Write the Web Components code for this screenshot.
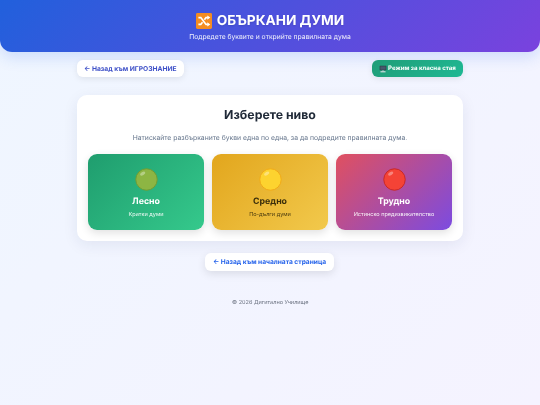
<!DOCTYPE html>
<html lang="bg">
<head>
<meta charset="utf-8">
<title>Объркани думи</title>
<style>
  html, body { margin: 0; height: 100%; }
  body {
    min-height: 405px;
    overflow: hidden;
    background: linear-gradient(135deg, #eff6ff 0%, #f5f3ff 100%);
    font-family: Inter, "Liberation Sans", sans-serif;
    text-rendering: geometricPrecision;
    color: #1f2937;
  }
</style>
</head>
<body>
<game-header>
  <span slot="title">ОБЪРКАНИ ДУМИ</span>
  Подредете буквите и открийте правилната дума
</game-header>

<page-main>
  <top-nav>
    <pill-link slot="left" tone="indigo">← Назад към ИГРОЗНАНИЕ</pill-link>
    <pill-link slot="right" tone="teal"><monitor-icon></monitor-icon> Режим за класна стая</pill-link>
  </top-nav>

  <level-panel>
    <span slot="title">Изберете ниво</span>
    <span slot="desc">Натискайте разбърканите букви една по една, за да подредите правилната дума.</span>
    <level-card kind="easy" name="Лесно" note="Кратки думи"></level-card>
    <level-card kind="medium" name="Средно" note="По-дълги думи"></level-card>
    <level-card kind="hard" name="Трудно" note="Истинско предизвикателство"></level-card>
  </level-panel>

  <pill-link tone="blue" large>← Назад към началната страница</pill-link>
  <page-footer>© 2026 Дигитално Училище</page-footer>
</page-main>

<script>
class GameHeader extends HTMLElement {
  constructor() {
    super();
    this.attachShadow({ mode: "open" });
  }
  connectedCallback() {
    this.shadowRoot.innerHTML = `
      <style>
        :host {
          display: flex;
          flex-direction: column;
          align-items: center;
          box-sizing: border-box;
          height: 52px;
          padding-top: 11.5px;
          color: #fff;
          background: linear-gradient(135deg, #2160dc 0%, #7a42de 100%);
          border-radius: 0 0 12px 12px;
          box-shadow: 0 5px 15px rgba(37,99,235,0.18);
          will-change: transform;
        }
        h1 {
          display: flex;
          align-items: center;
          gap: 5px;
          margin: 0;
          font-size: 13.7px;
          line-height: 18px;
          font-weight: 700;
          text-shadow: 0 1px 2px rgba(0,0,0,0.12);
        }
        svg { width: 16px; height: 16px; display: block; }
        p { margin: 2.5px 0 0; font-size: 6.75px; line-height: 9px; opacity: .92; }
      </style>
      <h1>
        <svg viewBox="0 0 16 16">
          <rect width="16" height="16" rx="1.4" fill="#f48c22"/>
          <path d="M2.4 4.6h2.4l5.2 6.8h1.8M2.4 11.4h2.4l1.7-2.2M8.4 6.8l1.6-2.2h1.8" fill="none" stroke="#fff" stroke-width="1.7"/>
          <path d="M11.3 2.4l3 2.2-3 2.2zM11.3 9.2l3 2.2-3 2.2z" fill="#fff"/>
        </svg>
        <slot name="title"></slot>
      </h1>
      <p><slot></slot></p>
    `;
  }
}

class PageMain extends HTMLElement {
  constructor() {
    super();
    this.attachShadow({ mode: "open" });
  }
  connectedCallback() {
    this.shadowRoot.innerHTML = `
      <style>
        :host {
          display: flex;
          flex-direction: column;
          align-items: center;
          width: 386px;
          margin: 0 auto;
          padding-top: 8px;
        }
      </style>
      <slot></slot>
    `;
  }
}

class TopNav extends HTMLElement {
  constructor() {
    super();
    this.attachShadow({ mode: "open" });
  }
  connectedCallback() {
    this.shadowRoot.innerHTML = `
      <style>
        :host {
          display: flex;
          justify-content: space-between;
          align-self: stretch;
          margin-bottom: 18px;
        }
      </style>
      <slot name="left"></slot>
      <slot name="right"></slot>
    `;
  }
}

class PillLink extends HTMLElement {
  constructor() {
    super();
    this.attachShadow({ mode: "open" });
  }
  connectedCallback() {
    this.shadowRoot.innerHTML = `
      <style>
        :host {
          display: inline-flex;
          align-items: center;
          gap: 1px;
          box-sizing: border-box;
          height: 17px;
          padding: 0 7px;
          border-radius: 6px;
          font-size: 6.7px;
          font-weight: 700;
          white-space: nowrap;
          background: #fff;
          box-shadow: 0 2px 6px rgba(0,0,0,0.08);
          will-change: transform;
        }
        :host([tone="indigo"]) { color: #3f51c8; }
        :host([tone="teal"]) {
          color: #fff;
          font-size: 6.1px;
          background: linear-gradient(135deg, #1f9d77, #1fb893);
        }
        :host([tone="blue"]) { color: #2563eb; }
        :host([large]) {
          height: 18px;
          margin-top: 12px;
          padding: 0 8px;
          font-size: 6.6px;
          box-shadow: 0 3px 9px rgba(0,0,0,0.1);
        }
      </style>
      <slot></slot>
    `;
  }
}

class MonitorIcon extends HTMLElement {
  constructor() {
    super();
    this.attachShadow({ mode: "open" });
  }
  connectedCallback() {
    this.shadowRoot.innerHTML = `
      <style>
        :host { display: inline-flex; }
        svg { width: 8px; height: 8px; display: block; }
      </style>
      <svg viewBox="0 0 12 12">
        <rect x="1" y="1" width="10" height="7" rx=".6" fill="#2f3a48"/>
        <rect x="2" y="2" width="8" height="5" fill="#46586c"/>
        <rect x="4.8" y="8" width="2.4" height="1.4" fill="#a8b2bc"/>
        <rect x="2.2" y="9.4" width="7.6" height="1.6" fill="#dfe4e8"/>
      </svg>
    `;
  }
}

class LevelPanel extends HTMLElement {
  constructor() {
    super();
    this.attachShadow({ mode: "open" });
  }
  connectedCallback() {
    this.shadowRoot.innerHTML = `
      <style>
        :host {
          display: flex;
          flex-direction: column;
          align-self: stretch;
          box-sizing: border-box;
          height: 146px;
          padding: 9.5px 11px 11px;
          background: #fff;
          border-radius: 10px;
          box-shadow: 0 4px 15px rgba(30,41,90,0.08);
          will-change: transform;
        }
        h2 {
          margin: 0;
          font-size: 12.3px;
          line-height: 19px;
          font-weight: 700;
          text-align: center;
          color: #1f2937;
        }
        p {
          margin: 9px 0 0;
          font-size: 6.8px;
          line-height: 9px;
          text-align: center;
          color: #64748b;
        }
        .grid {
          display: grid;
          grid-template-columns: repeat(3, 1fr);
          gap: 8px;
          margin-top: 12.5px;
        }
      </style>
      <h2><slot name="title"></slot></h2>
      <p><slot name="desc"></slot></p>
      <div class="grid"><slot></slot></div>
    `;
  }
}

class LevelCard extends HTMLElement {
  constructor() {
    super();
    this.attachShadow({ mode: "open" });
  }
  connectedCallback() {
    const dots = {
      easy: ["#8db543", "#6f9c33"],
      medium: ["#fdd32f", "#f0a818"],
      hard: ["#f44336", "#c62828"]
    };
    const [fill, edge] = dots[this.getAttribute("kind")];
    this.shadowRoot.innerHTML = `
      <style>
        :host {
          display: flex;
          flex-direction: column;
          align-items: center;
          box-sizing: border-box;
          height: 76px;
          padding-top: 14px;
          border-radius: 9px;
          color: #fff;
          box-shadow: 0 3px 9px rgba(0,0,0,0.12);
        }
        :host([kind="easy"]) { background: linear-gradient(135deg, #1f9d6e, #35c98c); }
        :host([kind="medium"]) { background: linear-gradient(135deg, #e2a61d, #f2c94c); color: #3b2f0b; }
        :host([kind="hard"]) { background: linear-gradient(135deg, #e0505f, #7c4be0); }
        svg { width: 23px; height: 23px; display: block; }
        strong { margin-top: 4px; font-size: 8.8px; line-height: 13px; font-weight: 700; }
        span { margin-top: 2.5px; font-size: 5.55px; line-height: 8px; opacity: .92; }
      </style>
      <svg viewBox="0 0 24 24">
        <circle cx="12" cy="12" r="11.2" fill="${fill}" stroke="${edge}" stroke-width="1"/>
        <ellipse cx="8" cy="5.8" rx="3" ry="1.7" fill="#fff" opacity=".35" transform="rotate(-30 8 5.8)"/>
      </svg>
      <strong>${this.getAttribute("name")}</strong>
      <span>${this.getAttribute("note")}</span>
    `;
  }
}

class PageFooter extends HTMLElement {
  constructor() {
    super();
    this.attachShadow({ mode: "open" });
  }
  connectedCallback() {
    this.shadowRoot.innerHTML = `
      <style>
        :host {
          display: block;
          margin-top: 28px;
          font-size: 5.55px;
          line-height: 8px;
          color: #6b7280;
          will-change: transform;
        }
      </style>
      <slot></slot>
    `;
  }
}

customElements.define("game-header", GameHeader);
customElements.define("page-main", PageMain);
customElements.define("top-nav", TopNav);
customElements.define("pill-link", PillLink);
customElements.define("monitor-icon", MonitorIcon);
customElements.define("level-panel", LevelPanel);
customElements.define("level-card", LevelCard);
customElements.define("page-footer", PageFooter);
</script>
</body>
</html>
